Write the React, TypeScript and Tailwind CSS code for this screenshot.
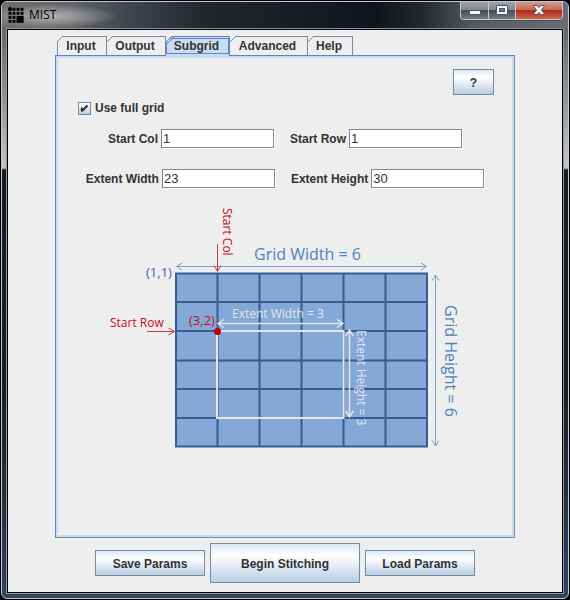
import { useState } from "react";

const tabs = [
  { name: "Input", width: "w-[50px]" },
  { name: "Output", width: "w-[59px]" },
  { name: "Subgrid", width: "w-[64px]" },
  { name: "Advanced", width: "w-[78px]" },
  { name: "Help", width: "w-[45px]" },
];

const swingButton =
  "border border-[#7a8a99] bg-linear-to-b from-[#dde8f3] via-white via-30% to-[#b8cfe5] pt-px text-center font-bold text-[#333]";

function AppIcon() {
  const dots: [number, number][] = [];
  for (let r = 0; r < 4; r++) {
    for (let c = 0; c < 4; c++) {
      if (!(r > 1 && c > 1)) dots.push([c, r]);
    }
  }
  return (
    <svg width="16" height="16" viewBox="0 0 16 16" fill="#050505" aria-hidden="true">
      {dots.map(([c, r]) => (
        <rect key={`${c}-${r}`} x={c * 4 + 0.5} y={r * 4 + 0.8} width="3" height="3" />
      ))}
      <rect x="8.5" y="8.8" width="7.2" height="7" />
      <circle cx="2" cy="2" r="2" />
    </svg>
  );
}

function TitleBar() {
  return (
    <header className="-mx-1 flex h-[26px] items-start bg-[linear-gradient(to_right,#6e6e72,#62646a_12%,#3b4149_24%,#22272e_36%,#0e141b_66%,#24282e_74%,#585b61_84%,#6a6d73)]">
      <div className="flex h-full w-32 items-center gap-[5px] bg-radial-[at_38%_55%] from-[#b4b1ae] to-transparent to-60% pl-[6px]">
        <AppIcon />
        <h1 className="font-['Open_Sans',sans-serif] text-[12px] leading-4 text-black">MIST</h1>
      </div>
      <div className="mr-[5px] ml-auto flex h-[18px] rounded-b-[4px] border border-t-0 border-[#c4c8cc] shadow-[0_1px_0_#4a4d52]">
        <button aria-label="Minimize" className="flex w-7 justify-center rounded-bl-[3px] border-r border-[#c4c8cc] bg-[linear-gradient(to_bottom,#a0a2a6,#85888d_45%,#484b52_50%,#777b81)]">
          <svg width="12" height="17" viewBox="0 0 12 17"><rect x="0.5" y="8.5" width="11" height="4" rx="0.5" fill="#f4f4f4" stroke="#50546a" /></svg>
        </button>
        <button aria-label="Maximize" className="flex w-[27px] justify-center border-r border-[#c4c8cc] bg-[linear-gradient(to_bottom,#a0a2a6,#85888d_45%,#484b52_50%,#777b81)]">
          <svg width="12" height="17" viewBox="0 0 12 17"><rect x="0.5" y="3.5" width="11" height="9" rx="0.5" fill="#f4f4f4" stroke="#50546a" /><rect x="3.5" y="6.5" width="5" height="3" fill="#70737b" stroke="#50546a" /></svg>
        </button>
        <button aria-label="Close" className="flex w-[46px] justify-center rounded-br-[3px] bg-[linear-gradient(to_bottom,#d69a8e,#c66a58_45%,#ad2a14_50%,#cc6a4c)]">
          <svg width="12" height="17" viewBox="0 0 12 17"><path d="M1 3.5h3.4L6 5.6l1.6-2.1H11v1.2L8.4 8l2.6 3.3v1.2H7.6L6 10.4l-1.6 2.1H1v-1.2L3.6 8 1 4.7z" fill="#f7f7f7" stroke="#535666" /></svg>
        </button>
      </div>
    </header>
  );
}

function TabStrip({ active, onSelect }: { active: string; onSelect: (t: string) => void }) {
  return (
    <div role="tablist" className="relative -mb-px flex pl-[2px]">
      {tabs.map((t, i) => {
        const on = t.name === active;
        const line = on ? "#6382bf" : "#7a8a99";
        return (
          <button
            key={t.name}
            role="tab"
            aria-selected={on}
            onClick={() => onSelect(t.name)}
            className={`relative h-5 border-t border-r pr-[2px] text-center font-bold leading-[17px] ${t.width} ${i === 0 ? "border-l" : ""} ${
              on ? "border-[#6382bf] bg-[#c8ddf2]" : "border-[#7a8a99] border-b border-b-[#6382bf] bg-[#eee]"
            }`}
          >
            {on && <span className="absolute inset-x-0 top-px bottom-[2px] border border-[#6382bf]" />}
            <svg className={`absolute -top-px ${i === 0 ? "-left-px" : "left-0"}`} width="8" height="8" viewBox="0 0 8 8" aria-hidden="true">
              <path d="M0 0H6L0 6z" fill="#eee" />
              <path d="M0 6L6 0" stroke={line} fill="none" />
              {on && <path d="M1 8L8 1" stroke={line} fill="none" />}
            </svg>
            <span className="relative">{t.name}</span>
          </button>
        );
      })}
    </div>
  );
}

function Field({ id, label, value }: { id: string; label: string; value: string }) {
  return (
    <div className="flex items-center gap-[3px]">
      <label htmlFor={id} className="font-bold">{label}</label>
      <input
        id={id}
        defaultValue={value}
        className="h-[19px] w-[113px] border border-[#7a8a99] bg-white pl-px text-[13px] text-[#333] shadow-[1px_1px_0_#fff] outline-none"
      />
    </div>
  );
}

function GridDiagram() {
  const blue = "#4f81bd";
  const red = "#c00d15";
  const pale = "#e4e4e8";
  return (
    <svg
      className="h-[255px] w-[370px]"
      viewBox="100 200 370 255"
      fontFamily="'Open Sans', sans-serif"
      fill="none"
      role="img"
      aria-label="Subgrid parameters"
    >
      <rect x="176" y="273.5" width="251" height="173" fill="#84a9d9" />
      <g stroke="#365d8c" strokeWidth="2">
        <path d="M217.5 273V447M259.5 273V447M301.5 273V447M343.5 273V447M385.5 273V447M176 302H427M176 331H427M176 360.5H427M176 389H427M176 418H427" />
        <rect x="176" y="273.5" width="251" height="173" />
      </g>
      <g stroke="#7a9fd0">
        <path d="M177 266.5H426M182 263L176.5 266.5L182 270M421 263L426.5 266.5L421 270" />
        <path d="M435.5 275V446M432 280.5L435.5 275L439 280.5M432 440.5L435.5 446L439 440.5" />
      </g>
      <g stroke={pale} strokeWidth="2">
        <rect x="217" y="331" width="126.5" height="87" />
        <path strokeWidth="1.5" d="M219 323.5H342M224 319.5L218 323.5L224 327.5M337 319.5L343 323.5L337 327.5" />
        <path strokeWidth="1.5" d="M349.5 331V416M345.5 336L349.5 330L353.5 336M345.5 411L349.5 417L353.5 411" />
      </g>
      <g stroke="#cc3a40">
        <path d="M217.5 244V271M214 265.5L217.5 271.5L221 265.5" />
        <path d="M147 331.5H174M168.5 328L174.5 331.5L168.5 335" />
      </g>
      <circle cx="217.5" cy="331.5" r="3.5" fill="#c00000" />
      <text x="254" y="260" fontSize="16" fill={blue}>Grid Width = 6</text>
      <text transform="translate(445 305) rotate(90)" fontSize="16" fill={blue}>Grid Height = 6</text>
      <text x="146" y="277" fontSize="13" fill="#3c6899">(1,1)</text>
      <text x="189" y="325" fontSize="13" fill={red}>(3,2)</text>
      <text x="110" y="327" fontSize="12" fill={red}>Start Row</text>
      <text transform="translate(223 208) rotate(90)" fontSize="12" fill={red}>Start Col</text>
      <text x="232" y="318" fontSize="12" fill={pale}>Extent Width = 3</text>
      <text transform="translate(357 330) rotate(90)" fontSize="12" fill={pale}>Extent Height = 3</text>
    </svg>
  );
}

export default function App() {
  const [active, setActive] = useState("Subgrid");
  return (
    <div className="flex min-h-screen flex-col bg-black p-px font-['Liberation_Sans',Arial,sans-serif] text-[12px] leading-4 text-[#333]">
      <div className="flex grow flex-col overflow-hidden rounded-[6px] border border-[#bfc5cb] bg-[linear-gradient(to_bottom,#66686d_30px,#c5c5c7_166px,#141b25_168px,#18202b_400px,#2c4562)] px-1 pb-1">
        <TitleBar />
        <div className="flex grow flex-col border border-[#8f979b]">
          <main className="flex grow flex-col border border-black bg-[#eee] px-[47px] pt-[6px] pb-[9px]">
            <TabStrip active={active} onSelect={setActive} />
            <section className="flex grow flex-col border border-t-[#6382bf] border-r-[#7a8a99] border-b-[#7a8a99] border-l-[#6382bf]">
              <div className="flex grow flex-col border-2 border-[#c8ddf2] pt-[11px]">
                <button aria-label="Help" className={`mr-[18px] h-[26px] w-[41px] self-end ${swingButton}`}>?</button>
                <label className="mt-[5px] flex items-center gap-1 self-start pl-5 font-bold">
                  <input type="checkbox" defaultChecked className="peer sr-only" />
                  <span className="flex size-[13px] items-center justify-center border border-[#7a8a99] bg-linear-to-b from-white to-[#b8cfe5] peer-checked:[&>svg]:visible">
                    <svg className="invisible" width="9" height="9" viewBox="0 0 9 9" aria-hidden="true">
                      <path d="M1.8 3.5V7.5M2 7L7.5 1.5" stroke="#222" strokeWidth="1.8" fill="none" />
                    </svg>
                  </span>
                  Use full grid
                </label>
                <div className="mt-[13px] flex justify-center gap-4">
                  <Field id="start-col" label="Start Col" value="1" />
                  <Field id="start-row" label="Start Row" value="1" />
                </div>
                <div className="mt-[21px] flex justify-center gap-4">
                  <Field id="extent-width" label="Extent Width" value="23" />
                  <Field id="extent-height" label="Extent Height" value="30" />
                </div>
                <div className="mt-3 flex justify-center">
                  <GridDiagram />
                </div>
              </div>
            </section>
            <footer className="mt-[5px] flex items-center justify-center gap-[5px]">
              <button className={`h-[26px] w-[110px] ${swingButton}`}>Save Params</button>
              <button className={`h-10 w-[150px] ${swingButton}`}>Begin Stitching</button>
              <button className={`h-[26px] w-[110px] ${swingButton}`}>Load Params</button>
            </footer>
          </main>
        </div>
      </div>
    </div>
  );
}
